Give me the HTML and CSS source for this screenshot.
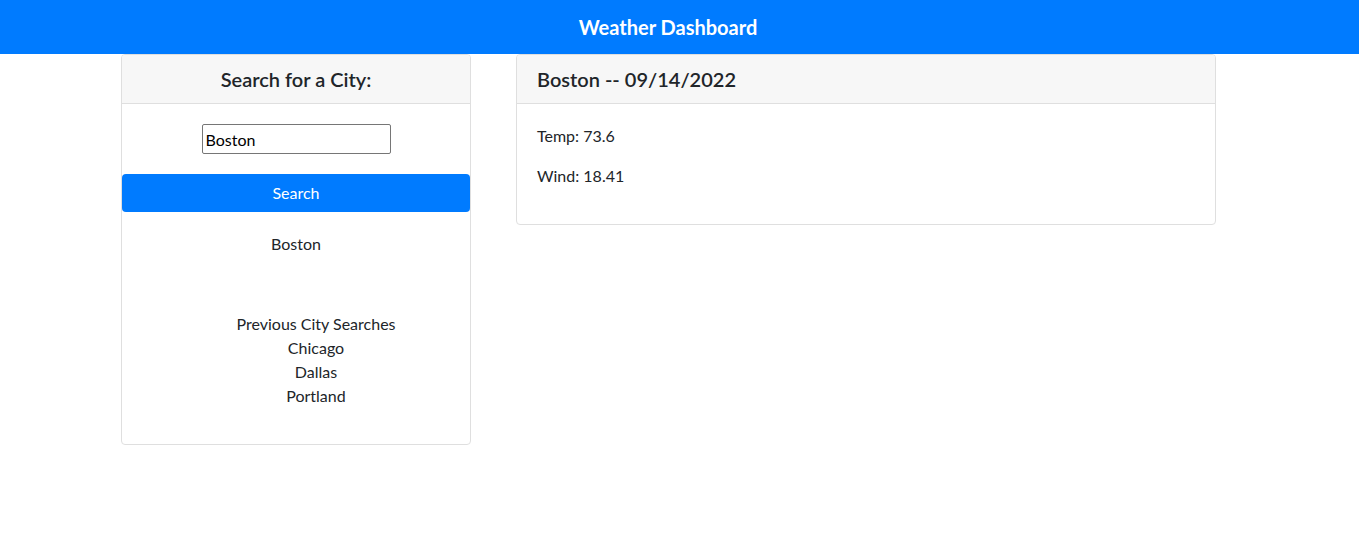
FILE: index.html
```html
<!DOCTYPE html>
<html lang="en">
<head>
<meta charset="utf-8">
<title>Weather Dashboard</title>
<link rel="stylesheet" href="styles.css">
</head>
<body>
<header class="topbar">
  <h1 class="brand">Weather Dashboard</h1>
</header>
<main class="main">
  <section class="card card-search">
    <div class="card-header centered">
      <h5 class="card-title">Search for a City:</h5>
    </div>
    <div class="search-body">
      <input class="city-input" type="text" value="Boston">
      <button class="btn-search" type="button">Search</button>
      <div class="current-city">Boston</div>
      <ul class="history">
        <li>Previous City Searches</li>
        <li>Chicago</li>
        <li>Dallas</li>
        <li>Portland</li>
      </ul>
    </div>
  </section>
  <section class="card card-weather">
    <div class="card-header">
      <h5 class="card-title">Boston -- 09/14/2022</h5>
    </div>
    <div class="weather-body">
      <p>Temp: 73.6</p>
      <p>Wind: 18.41</p>
    </div>
  </section>
</main>
</body>
</html>
```
FILE: styles.css
```css
* { box-sizing: border-box; }
html, body {
  margin: 0;
  background: #fff;
}
body {
  font-family: Lato, "Noto Sans", "Liberation Sans", sans-serif;
  font-size: 16px;
  line-height: 24px;
  color: #212529;
}
.topbar {
  background: #007bff;
  height: 54px;
  display: flex;
  align-items: center;
  justify-content: center;
  padding-right: 23px;
}
.brand {
  margin: 0;
  color: #fff;
  font-size: 20px;
  font-weight: 700;
  line-height: 24px;
}
.main {
  display: flex;
  align-items: flex-start;
  gap: 45px;
  padding: 0 121px;
}
.card {
  border: 1px solid #dfdfdf;
  border-radius: 4px;
  background: #fff;
  overflow: hidden;
}
.card-search { width: 350px; }
.card-weather { width: 700px; }
.card-header {
  background: #f7f7f7;
  border-bottom: 1px solid #dfdfdf;
  padding: 12px 20px;
}
.card-header.centered { text-align: center; }
.card-title {
  margin: 0;
  font-size: 20px;
  font-weight: 600;
  line-height: 24px;
}
.search-body {
  display: flex;
  flex-direction: column;
  align-items: center;
  padding: 20px 0 36px;
}
.city-input {
  width: 189px;
  height: 30px;
  border: 1px solid #767676;
  border-radius: 2px;
  padding: 1px 3px;
  font: inherit;
  color: #000;
}
.btn-search {
  align-self: stretch;
  margin-top: 20px;
  height: 38px;
  border: 0;
  border-radius: 4px;
  background: #007bff;
  color: #fff;
  font: inherit;
  line-height: 24px;
  padding: 6px 12px;
}
.current-city {
  margin-top: 20px;
}
.history {
  align-self: stretch;
  list-style: none;
  margin: 56px 0 0;
  padding: 0 0 0 40px;
  text-align: center;
}
.weather-body {
  padding: 20px;
}
.weather-body p {
  margin: 0 0 16px;
}
```
